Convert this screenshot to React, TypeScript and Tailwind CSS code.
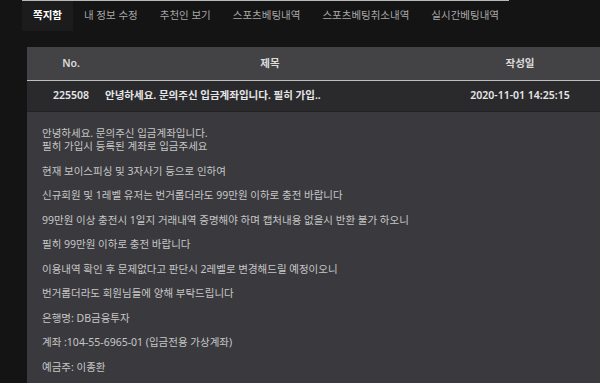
const tabs = ['쪽지함', '내 정보 수정', '추천인 보기', '스포츠베팅내역', '스포츠베팅취소내역', '실시간베팅내역']

const body: string[][] = [
  ['안녕하세요. 문의주신 입금계좌입니다.', '필히 가입시 등록된 계좌로 입금주세요'],
  ['현재 보이스피싱 및 3자사기 등으로 인하여'],
  ['신규회원 및 1레벨 유저는 번거롭더라도 99만원 이하로 충전 바랍니다'],
  ['99만원 이상 충전시 1일지 거래내역 증명해야 하며 캡처내용 없을시 반환 불가 하오니'],
  ['필히 99만원 이하로 충전 바랍니다'],
  ['이용내역 확인 후 문제없다고 판단시 2레벨로 변경해드릴 예정이오니'],
  ['번거롭더라도 회원님들에 양해 부탁드립니다'],
  ['은행명: DB금융투자'],
  ['계좌 :104-55-6965-01 (입금전용 가상계좌)'],
  ['예금주: 이종환'],
]

export default function App() {
  return (
    <div className="w-[600px] h-[383px] overflow-hidden bg-[#141414] font-['Noto_Sans','Noto_Sans_CJK_KR',sans-serif]">
      {/* Tabs */}
      <nav className="ml-[22px] w-[487px] border-t border-[#b8b8b8] flex">
        {tabs.map((t, i) => (
          <div
            key={t}
            className={
              i === 0
                ? 'shrink-0 whitespace-nowrap h-[30px] px-[11px] flex items-center text-[10.5px] font-bold text-white bg-[#1c1c1c]'
                : 'shrink-0 whitespace-nowrap h-[30px] px-[11px] flex items-center text-[10.5px] text-[#a8a8a8]'
            }
          >
            {t}
          </div>
        ))}
      </nav>

      {/* Panel */}
      <div className="ml-[27px] mt-[16px]">
        <div className="h-[34px] bg-[#434346] grid grid-cols-[78px_330px_1fr] items-center text-[10.5px] font-semibold text-[#dcdcdc] border-b border-[#bdbdbd]">
          <div className="pl-[10px] text-center">No.</div>
          <div className="text-center">제목</div>
          <div className="pl-[5px] text-center">작성일</div>
        </div>
        <div className="h-[31px] bg-[#2a2a2d] grid grid-cols-[78px_330px_1fr] items-center text-[10.5px] font-semibold text-[#e6e6e6] border-b border-[#222224]">
          <div className="pl-[10px] text-center">225508</div>
          <div>안녕하세요. 문의주신 입금계좌입니다. 필히 가입..</div>
          <div className="pl-[5px] text-center">2020-11-01 14:25:15</div>
        </div>
        <div className="h-[300px] bg-[#3a3a3e] pl-[15px] pt-[15px] flex flex-col gap-[11.5px] text-[10.5px] leading-[13px] text-[#c6c6c6]">
          {body.map((p, i) => (
            <div key={i}>
              {p.map((l) => (
                <p key={l}>{l}</p>
              ))}
            </div>
          ))}
        </div>
      </div>
    </div>
  )
}
